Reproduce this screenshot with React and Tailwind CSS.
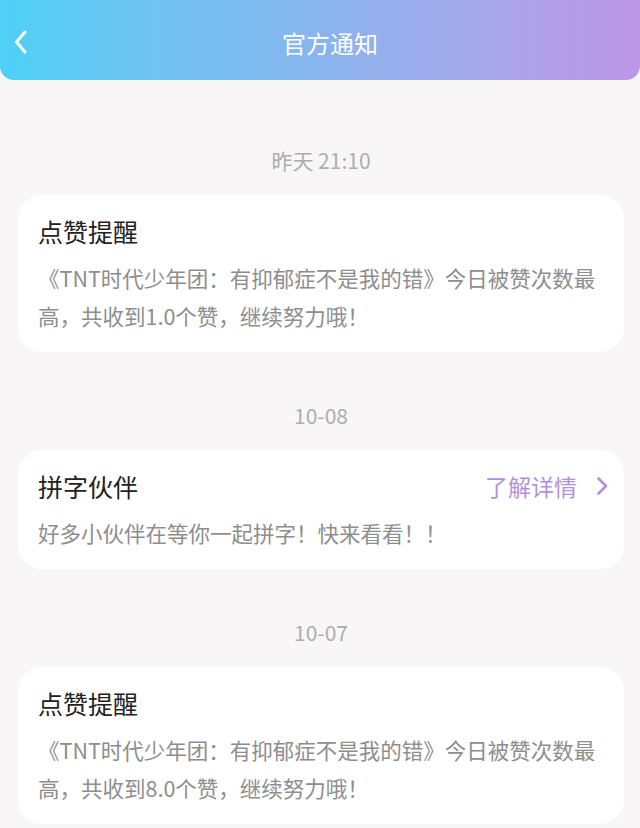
const FONT = { fontFamily: '"Noto Sans CJK SC", "Noto Sans", sans-serif' };

const notices = [
  {
    date: '昨天 21:10',
    title: '点赞提醒',
    body: '《TNT时代少年团：有抑郁症不是我的错》今日被赞次数最高，共收到1.0个赞，继续努力哦！',
  },
  {
    date: '10-08',
    title: '拼字伙伴',
    body: '好多小伙伴在等你一起拼字！快来看看！！',
    link: '了解详情',
  },
  {
    date: '10-07',
    title: '点赞提醒',
    body: '《TNT时代少年团：有抑郁症不是我的错》今日被赞次数最高，共收到8.0个赞，继续努力哦！',
  },
];

function BackIcon() {
  return (
    <svg width="16" height="26" viewBox="0 0 16 26" fill="none">
      <path d="M12 3 L3.5 13 L12 23" stroke="white" strokeWidth="3" strokeLinecap="round" strokeLinejoin="round" />
    </svg>
  );
}

function Chevron() {
  return (
    <svg width="12" height="20" viewBox="0 0 12 20" fill="none">
      <path d="M2.5 2.5 L10 10 L2.5 17.5" stroke="#b48fe0" strokeWidth="2.6" strokeLinecap="round" strokeLinejoin="round" />
    </svg>
  );
}

function NoticeCard({ item }) {
  return (
    <div className="mt-[49px]">
      <div className="text-center text-[21px] leading-[28px] text-[#adadad]">{item.date}</div>
      <div className="mt-[21px] rounded-[24px] bg-white px-[20px] pt-[20px] pb-[17px]">
        <div className="flex items-center justify-between">
          <span className="text-[25px] leading-[32px] text-[#222222]">{item.title}</span>
          {item.link && (
            <span className="-mr-[4px] flex items-center gap-[19px] text-[23px] leading-[32px] text-[#b48fe0]">
              {item.link}
              <Chevron />
            </span>
          )}
        </div>
        <p className="mt-[12px] text-[21.5px] leading-[38px] text-[#8e8e8e]">{item.body}</p>
      </div>
    </div>
  );
}

export default function App() {
  return (
    <div className="min-h-[828px] w-[640px] bg-[#f8f6f7]" style={FONT}>
      <header className="relative flex h-[80px] items-center justify-center rounded-b-[14px] bg-gradient-to-r from-[#4dd0f6] via-[#88b5ee] to-[#bd96e6] pt-[6px] pl-[20px]">
        <span className="absolute left-[13px] top-[29px]">
          <BackIcon />
        </span>
        <h1 className="text-[24px] text-white">官方通知</h1>
      </header>
      <div className="pt-[17px] pl-[18px] pr-[16px]">
        {notices.map((n, i) => (
          <NoticeCard key={i} item={n} />
        ))}
      </div>
    </div>
  );
}
